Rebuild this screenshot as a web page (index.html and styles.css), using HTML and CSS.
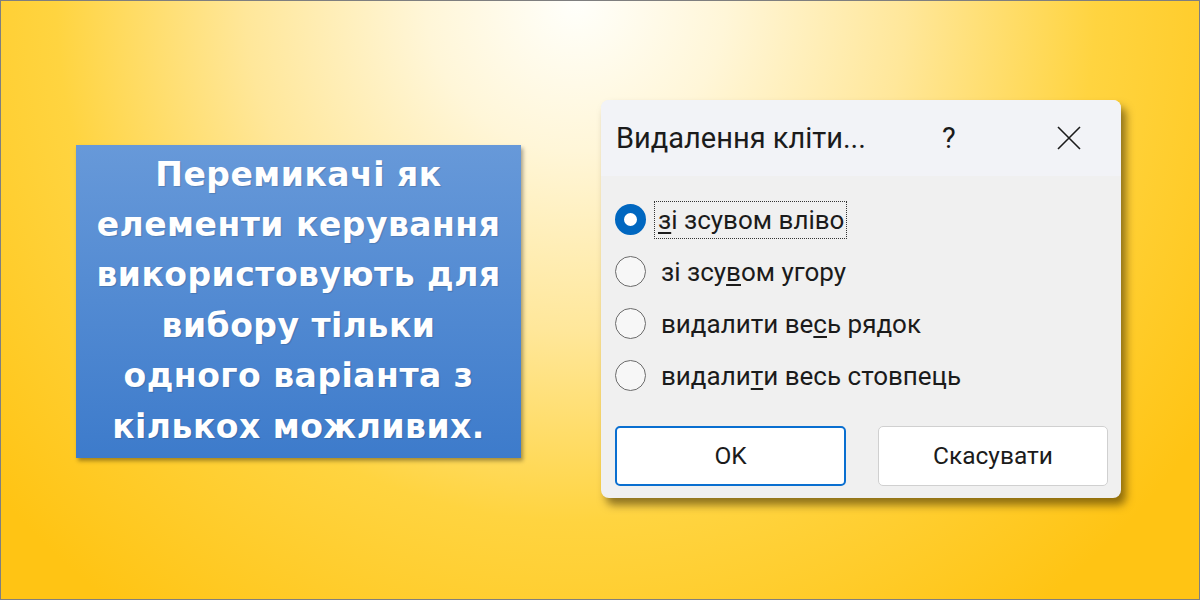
FILE: index.html
```html
<!DOCTYPE html>
<html lang="uk">
<head>
    <meta charset="UTF-8">
    <title>Перемикачі</title>
    <link rel="stylesheet" href="styles.css">
</head>
<body>
    <div class="page">
        <div class="note">
            <p>Перемикачі як<br>елементи керування<br>використовують для<br>вибору тільки<br>одного варіанта з<br>кількох можливих.</p>
        </div>

        <div class="dialog">
            <div class="title-bar">
                <span class="title">Видалення кліти...</span>
                <span class="help">?</span>
                <span class="close">
                    <svg width="24" height="24" viewBox="0 0 24 24">
                        <path d="M1 1 L23 23 M23 1 L1 23" stroke="#1b1b1b" stroke-width="1.6" fill="none"/>
                    </svg>
                </span>
            </div>

            <div class="dialog-body">
                <div class="options">
                    <label class="option">
                        <span class="radio checked"></span>
                        <span class="text focused"><u>з</u>і зсувом вліво</span>
                    </label>
                    <label class="option">
                        <span class="radio"></span>
                        <span class="text">зі зсу<u>в</u>ом угору</span>
                    </label>
                    <label class="option">
                        <span class="radio"></span>
                        <span class="text">видалити ве<u>с</u>ь рядок</span>
                    </label>
                    <label class="option">
                        <span class="radio"></span>
                        <span class="text">видали<u>т</u>и весь стовпець</span>
                    </label>
                </div>

                <div class="buttons">
                    <button class="btn btn-default">OK</button>
                    <button class="btn btn-cancel">Скасувати</button>
                </div>
            </div>
        </div>
    </div>
</body>
</html>
```
FILE: styles.css
```css
* {
    margin: 0;
    padding: 0;
    box-sizing: border-box;
}

body {
    font-family: Roboto, 'Noto Sans', sans-serif;
    color: #1b1b1b;
}

.page {
    width: 1200px;
    height: 600px;
    border: 1px solid #7f7f7f;
    background: radial-gradient(circle at 48% 0%, #fffffb 0, #fff6d8 150px, #ffe79a 330px, #ffd440 520px, #ffc414 760px);
    display: flex;
    align-items: center;
    padding-left: 75px;
    gap: 80px;
}

/* blue note on the left */
.note {
    width: 445px;
    height: 313px;
    margin-top: 2px;
    background: linear-gradient(#6799d9, #3d7bcb);
    box-shadow: 2px 3px 4px rgba(0,0,0,0.35);
    padding-top: 5px;
}

.note p {
    font-family: 'Comic Sans MS', 'DejaVu Sans', sans-serif;
    font-weight: bold;
    font-size: 33px;
    line-height: 50.4px;
    color: #fff;
    text-align: center;
    letter-spacing: 0.5px;
    text-shadow: 1px 1px 1px rgba(0,0,0,0.15);
}

/* dialog */
.dialog {
    width: 520px;
    height: 398px;
    margin-bottom: 3px;
    border-radius: 8px;
    overflow: hidden;
    background: #f0f0f0;
    box-shadow: 5px 7px 9px rgba(50,35,0,0.55);
}

.title-bar {
    height: 76px;
    background: #f2f3f7;
    display: flex;
    align-items: center;
    padding-left: 15px;
}

.title {
    font-size: 29px;
    flex: 1;
}

.help {
    font-size: 29px;
    width: 100px;
}

.close {
    width: 79px;
    display: flex;
    padding-left: 15px;
}

.dialog-body {
    padding: 18px 12px 12px 14px;
}

.options {
    display: flex;
    flex-direction: column;
    height: 232px;
}

.option {
    display: flex;
    align-items: center;
    height: 52px;
    font-size: 26px;
}

.radio {
    width: 31px;
    height: 31px;
    flex-shrink: 0;
    border-radius: 50%;
    border: 1.5px solid #6b6b6b;
    background: #f7f7f7;
    margin-right: 12px;
}

.radio.checked {
    border: 9.5px solid #0067c0;
    background: #fff;
}

.text {
    padding: 3px 2px;
    border: 1px dotted transparent;
}

.text.focused {
    border-color: #333;
    margin-left: -4px;
    padding: 3px 2px 3px 3px;
}

.text u {
    text-underline-offset: 3px;
}

.buttons {
    display: flex;
    gap: 32px;
}

.btn {
    height: 60px;
    border-radius: 5px;
    background: #fff;
    font-family: inherit;
    font-size: 24.5px;
    color: #1b1b1b;
}

.btn-default {
    width: 231px;
    border: 2px solid #0a6fd0;
}

.btn-cancel {
    width: 230px;
    border: 1px solid #d0d0d0;
}
```
